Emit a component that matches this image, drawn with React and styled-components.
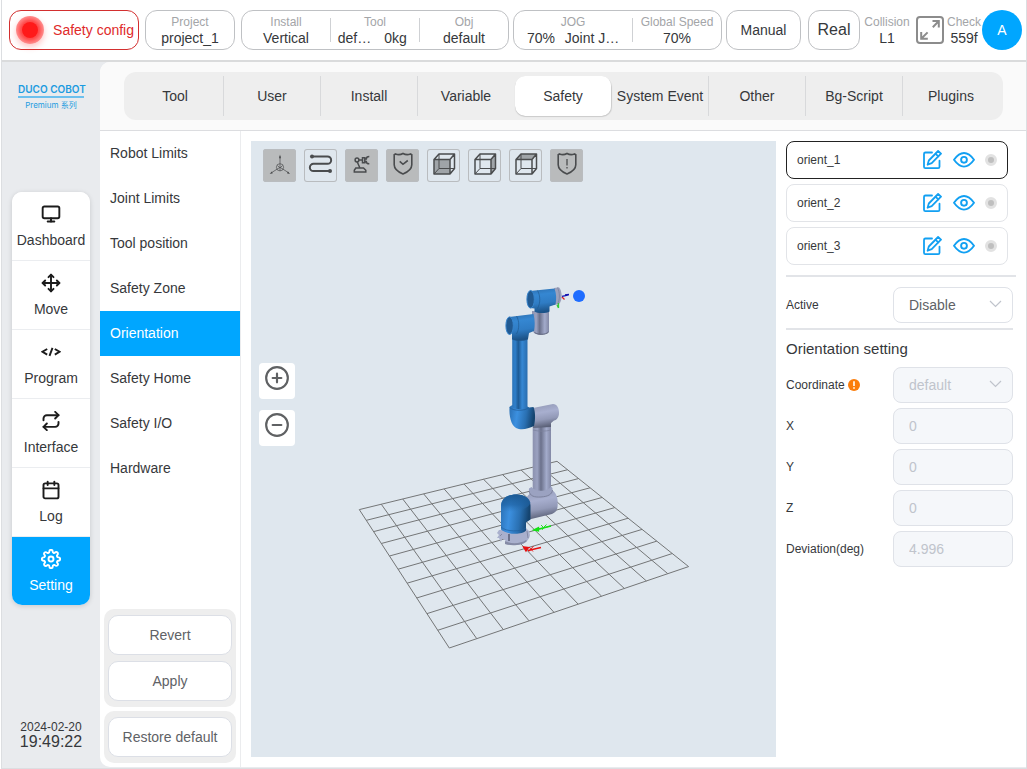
import React, { useState } from 'react';
import styled, { createGlobalStyle } from 'styled-components';
import { FiMonitor, FiMove, FiRepeat, FiCalendar, FiSettings, FiPlusCircle, FiMinusCircle } from 'react-icons/fi';

const GlobalStyle = createGlobalStyle`
	* {
		box-sizing: border-box;
	}
	body {
		margin: 0;
		background: #fff;
		color: #36383b;
		font-family: "Liberation Sans", Arial, sans-serif;
		font-size: 14px;
	}
	button, input, select {
		font-family: inherit;
		font-size: inherit;
		color: inherit;
	}
`;

const Page = styled.div`
	display: flex;
	flex-direction: column;
	min-height: 100vh;
	margin: 0 0 0 1px;
	border: 1px solid #dcdee1;
	border-top: none;
	background: #e9ebee;
`;

/* ---------- header ---------- */

const Header = styled.header`
	display: flex;
	align-items: center;
	gap: 4px;
	height: 62px;
	padding: 0 4px 0 7px;
	background: #fff;
	border-bottom: 2px solid #dadbdc;
`;

const Cluster = styled.div`
	display: flex;
	align-items: center;
	gap: ${props => props.$gap || 0}px;
	margin-left: ${props => (props.$end ? 'auto' : '0')};
`;

const Card = styled.div`
	display: flex;
	align-items: center;
	height: 40px;
	border: 1px solid #bfc1c4;
	border-radius: 12px;
	background: #fff;
`;

const CardButton = styled.button`
	width: ${props => props.$width}px;
	height: 40px;
	padding: 0;
	border: 1px solid #bfc1c4;
	border-radius: 12px;
	background: #fff;
	font-size: ${props => props.$size || 14}px;
`;

const SafetyButton = styled.button`
	display: flex;
	align-items: center;
	justify-content: space-between;
	width: 130px;
	height: 40px;
	padding: 0 4px 0 6px;
	border: 1px solid #d32f2f;
	border-radius: 12px;
	background: #fff;
	color: #e02a2a;
	white-space: nowrap;
`;

const Lamp = styled.span`
	display: flex;
	align-items: center;
	justify-content: center;
	width: 28px;
	height: 28px;
	border-radius: 50%;
	background: radial-gradient(#ff4d4d 45%, #ff9292 72%);
	box-shadow: 0 3px 6px rgba(255, 60, 60, 0.3);

	&::after {
		content: '';
		width: 16px;
		height: 16px;
		border-radius: 50%;
		background: #ff1a1a;
	}
`;

const Cell = styled.div`
	display: flex;
	flex-direction: column;
	align-items: center;
	width: ${props => props.$width}px;
	white-space: nowrap;
`;

const Divider = styled.span`
	width: 1px;
	height: 24px;
	background: #cfd1d4;
`;

const CellLabel = styled.span`
	color: #a3a5a8;
	font-size: 12px;
	line-height: 15px;
`;

const CellValue = styled.span`
	display: flex;
	line-height: 16px;
`;

const ValuePart = styled.span`
	width: ${props => props.$width}px;
	text-align: center;
`;

const ExpandButton = styled.button`
	display: flex;
	justify-content: center;
	width: 32px;
	padding: 0;
	border: none;
	background: none;
`;

const Avatar = styled.button`
	width: 40px;
	height: 40px;
	padding: 0;
	border: none;
	border-radius: 50%;
	background: #00a6ff;
	color: #fff;
`;

/* ---------- left side ---------- */

const Main = styled.div`
	display: flex;
	flex: 1;
	padding-bottom: 1px;
`;

const Sidebar = styled.aside`
	display: flex;
	flex-direction: column;
	align-items: center;
	width: 98px;
	padding: 20px 0 17px;
`;

const Logo = styled.div`
	width: 66px;
	color: #1c9be0;
	text-align: center;
	white-space: nowrap;
`;

const LogoName = styled.div`
	font-family: Inter, sans-serif;
	font-size: 10px;
	font-weight: 600;
	line-height: 14px;
	border-bottom: 2px solid #6cc0ee;
`;

const LogoSeries = styled.div`
	font-family: Inter, "Noto Sans CJK SC", sans-serif;
	font-size: 8px;
	line-height: 15px;
`;

const Nav = styled.nav`
	display: flex;
	flex-direction: column;
	width: 78px;
	margin-top: 79px;
	border-radius: 10px;
	background: #fff;
	box-shadow: 0 1px 5px rgba(0, 0, 0, 0.15);
	overflow: hidden;
`;

const NavButton = styled.button`
	display: flex;
	flex-direction: column;
	align-items: center;
	gap: 8px;
	height: 69px;
	padding: 12px 0 0;
	border: none;
	border-bottom: 1px solid #ebedf0;
	background: ${props => (props.$active ? '#00a6ff' : '#fff')};
	color: ${props => (props.$active ? '#fff' : '#36383b')};
	line-height: 16px;

	&:last-child {
		border-bottom: none;
		height: 68px;
	}

	svg {
		color: ${props => (props.$active ? '#fff' : '#1c1c1c')};
		stroke-width: 2.3;
	}
`;

const Clock = styled.div`
	margin-top: auto;
	font-size: 16px;
	line-height: 16px;
	text-align: center;
`;

const ClockDate = styled.div`
	font-size: 12px;
	line-height: 14px;
`;

/* ---------- content ---------- */

const Panel = styled.main`
	display: flex;
	flex: 1;
	flex-direction: column;
	min-width: 0;
	border-radius: 10px 0 0 10px;
	background: #fff;
	overflow: hidden;
`;

const TabArea = styled.div`
	padding: 10px 23px 10px 24px;
	background: #fafafa;
	border-bottom: 1px solid #dcdde0;
`;

const Tabs = styled.div`
	display: flex;
	padding: 4px 3px;
	border-radius: 12px;
	background: #eee;
`;

const Tab = styled.button`
	flex: 1 1 0;
	min-width: 0;
	height: 40px;
	padding: 0;
	border: none;
	border-right: 1px solid ${props => (props.$line ? '#d8d9db' : 'transparent')};
	border-radius: ${props => (props.$active ? '10px' : '0')};
	background: ${props => (props.$active ? '#fff' : 'none')};
	background-clip: padding-box;
	box-shadow: ${props => (props.$active ? '0 1px 1px rgba(0, 0, 0, 0.15)' : 'none')};
	white-space: nowrap;
`;

const Body = styled.div`
	display: flex;
	flex: 1;
`;

const Menu = styled.div`
	display: flex;
	flex-direction: column;
	width: 141px;
	padding-bottom: 4px;
	border-right: 1px solid #ebecee;
`;

const MenuItem = styled.button`
	height: 45px;
	padding: 0 10px 1px;
	border: none;
	background: ${props => (props.$active ? '#00a6ff' : 'none')};
	color: ${props => (props.$active ? '#fff' : '#36383b')};
	text-align: left;
`;

const Actions = styled.div`
	display: flex;
	flex-direction: column;
	gap: 4px;
	margin-top: auto;
	padding: 0 4px;
`;

const ActionGroup = styled.div`
	display: flex;
	flex-direction: column;
	gap: 6px;
	padding: 6px 4px;
	border-radius: 10px;
	background: #eee;
`;

const ActionButton = styled.button`
	height: 40px;
	padding: 0;
	border: 1px solid #dcdfe6;
	border-radius: 10px;
	background: #fff;
	color: #606266;
`;

/* ---------- 3D view ---------- */

const Viewer = styled.section`
	position: relative;
	flex: 1;
	margin: 10px 0 10px 10px;
	background: #dfe7ee;
`;

const Scene = styled.svg`
	position: absolute;
	top: 0;
	left: 0;
	width: 100%;
	height: 100%;
`;

const Toolbar = styled.div`
	position: relative;
	display: flex;
	gap: 8px;
	padding: 8px 12px;
`;

const ToolButton = styled.button`
	display: flex;
	width: 33px;
	height: 33px;
	padding: 0;
	border: none;
	border-radius: 3px;
	background: ${props => (props.$on ? '#b9bbbc' : 'transparent')};
	box-shadow: inset 0 0 0 1px #b9bcbf;
	color: #4a4c4e;
`;

const ZoomButtons = styled.div`
	position: absolute;
	top: 222px;
	left: 8px;
	display: flex;
	flex-direction: column;
	gap: 11px;
`;

const ZoomButton = styled.button`
	display: flex;
	align-items: flex-start;
	justify-content: center;
	width: 36px;
	height: 36px;
	padding: 2px 0 0;
	border: none;
	border-radius: 4px;
	background: #fff;
	color: #5f6163;
`;

/* ---------- right side ---------- */

const Settings = styled.section`
	width: 250px;
	padding: 10px;
	font-size: 12px;
`;

const OrientList = styled.div`
	display: flex;
	flex-direction: column;
	gap: 5px;
	padding-right: 8px;
`;

const OrientRow = styled.div`
	display: flex;
	align-items: center;
	gap: 10px;
	height: 38px;
	padding: 0 10px;
	border: 1px solid ${props => (props.$active ? '#222' : '#e2e4e8')};
	border-radius: 8px;
`;

const OrientName = styled.span`
	flex: 1;
`;

const IconButton = styled.button`
	display: flex;
	padding: 0;
	border: none;
	background: none;
	color: #12a0f2;
`;

const StateDot = styled.span`
	width: 12px;
	height: 12px;
	border: 3px solid #e2e2e2;
	border-radius: 50%;
	background: #bfbfbf;
`;

const Rule = styled.hr`
	width: 100%;
	height: 2px;
	margin: ${props => props.$top}px 0 ${props => props.$bottom || 0}px;
	border: none;
	background: #e2e4e8;
`;

const Form = styled.div`
	padding-right: 3px;
`;

const Fields = styled.div`
	display: flex;
	flex-direction: column;
	gap: 5px;
`;

const Title = styled.h2`
	margin: 0;
	font-size: 15px;
	font-weight: 400;
	line-height: 37px;
`;

const Field = styled.div`
	display: flex;
	align-items: center;
	justify-content: space-between;
`;

const FieldLabel = styled.label`
	display: flex;
	align-items: center;
	gap: 3px;
`;

const Input = styled.input`
	width: 120px;
	height: 36px;
	padding: 0 15px;
	border: 1px solid #dfe2e8;
	border-radius: 8px;
	background: #fff;
	color: #606266;
	font-size: 14px;

	&:disabled {
		background: #f5f7fa;
		color: #c0c4cc;
		opacity: 1;
	}
`;

const Select = styled(Input)`
	appearance: none;
`;

const SelectBox = styled.div`
	position: relative;
	display: flex;
`;

const Chevron = styled.svg`
	position: absolute;
	top: 13px;
	right: 11px;
	pointer-events: none;
`;

/* ---------- data ---------- */

const NAV = [
	{ name: 'Dashboard', icon: <FiMonitor size={20} /> },
	{ name: 'Move', icon: <FiMove size={20} /> },
	{ name: 'Program', icon: <CodeIcon /> },
	{ name: 'Interface', icon: <FiRepeat size={20} /> },
	{ name: 'Log', icon: <FiCalendar size={20} /> },
	{ name: 'Setting', icon: <FiSettings size={20} /> },
];

const TABS = ['Tool', 'User', 'Install', 'Variable', 'Safety', 'System Event', 'Other', 'Bg-Script', 'Plugins'];

const MENU = [
	'Robot Limits', 'Joint Limits', 'Tool position', 'Safety Zone',
	'Orientation', 'Safety Home', 'Safety I/O', 'Hardware',
];

const ORIENTS = ['orient_1', 'orient_2', 'orient_3'];

/* ---------- icons ---------- */

function CodeIcon() {
	return (
		<svg width="20" height="20" viewBox="0 0 20 20" fill="none" stroke="currentColor">
			<path d="M6.200 7L1.500 9.800l4.700 2.800M13.800 7l4.700 2.800-4.700 2.800M11.500 5.800L8.500 13.800" strokeWidth="1.900" />
		</svg>
	);
}

const ExpandIcon = () => (
	<svg width="28" height="28" viewBox="0 0 28 28" fill="none" stroke="#8c8c8c" strokeWidth="2">
		<rect x="1" y="1" width="26" height="26" rx="3" />
		<path d="M16.500 5h6.300v6.500M22.800 5l-6 6.200M5.200 16v6.800h6.600M5.200 22.800l6.400-6.400" />
	</svg>
);

const EditIcon = () => (
	<svg width="20" height="20" viewBox="0 0 20 20" fill="none" stroke="currentColor" strokeWidth="1.800" strokeLinejoin="round" strokeLinecap="round">
		<path d="M9 2.500H2.400A1.400 1.400 0 0 0 1 3.900v12.800a1.400 1.400 0 0 0 1.400 1.400h12.700a1.400 1.400 0 0 0 1.400-1.400v-6" />
		<path d="M4.600 14.700l1.200-4.200 9.300-9.500 2.900 2.700-9.300 9.500z" />
		<path d="M12.700 3.800l2.600 2.500" />
	</svg>
);

const EyeIcon = () => (
	<svg width="22" height="16" viewBox="0 0 22 16" fill="none" stroke="currentColor" strokeWidth="1.900" strokeLinejoin="round">
		<path d="M1 7.800c3.400-4.800 6.600-6.800 10-6.800s6.600 2 10 6.800c-3.400 4.800-6.600 6.800-10 6.800s-6.600-2-10-6.800z" />
		<circle cx="11" cy="7.800" r="2.900" />
	</svg>
);

const WarnIcon = () => (
	<svg width="12" height="12" viewBox="0 0 12 12">
		<circle cx="6" cy="6" r="6" fill="#fb7d0b" />
		<path d="M6 2.300v4.700M6 8.300v1.500" stroke="#fff" strokeWidth="1.600" />
	</svg>
);

const SHIELD = 'M17 4.500c2.500 1.400 5 1.500 7.500.5l1.300.8v10c0 4.300-3.300 7-8.800 9.200-5.500-2.200-8.800-4.900-8.800-9.200v-10l1.300-.8c2.500 1 5 .9 7.500-.5z';

const TOOLS = [
	{
		name: 'Axes',
		on: true,
		art: (
			<g strokeWidth="0.700">
				<circle cx="17" cy="18.300" r="3.600" />
				<path d="M17 18.300V7M17 18.300L8 24M17 18.300L26 24M14.500 16.500L17 19l2.500-2.500M17 19v3" />
				<path d="M17 5.500l1 3.800h-2zM6.700 25l2-2.500 1.200 1.700zM27 25l-2-2.500-1.200 1.700z" fill="currentColor" stroke="none" />
			</g>
		),
	},
	{
		name: 'Path',
		art: (
			<g strokeWidth="2">
				<path d="M8 7.500h15.500a3.600 3.600 0 0 1 0 7.300h-14a3.600 3.600 0 0 0 0 7.300H26" />
				<circle cx="8" cy="7.500" r="2" fill="currentColor" stroke="none" />
				<circle cx="26" cy="22.100" r="2" fill="currentColor" stroke="none" />
			</g>
		),
	},
	{
		name: 'Robot model',
		on: true,
		art: (
			<g strokeWidth="1.500">
				<circle cx="12" cy="11" r="1.900" />
				<path d="M14 11h3.500M12.300 13l2.500 5.800M10.800 19h7.700l2.300 2.300V23H9.300v-1.700z" />
				<path d="M17.500 8.700h2.300v5h-2.300zM24.300 7.500c-2.500 0-3 1-3 2.400h-1.500M24.300 14.800c-2.500 0-3-1-3-2.400h-1.500" />
			</g>
		),
	},
	{
		name: 'Safety planes',
		on: true,
		art: <g strokeWidth="1.600"><path d={SHIELD} /><path d="M13.700 12.300l3.300 3 4.800-3.800" /></g>,
	},
	{ name: 'Front view', art: <Cube face="M7 10.500h16V25H7z" /> },
	{ name: 'Side view', art: <Cube face="M23 10.500L27.500 5v14.500L23 25z" /> },
	{ name: 'Top view', art: <Cube face="M7 10.500L12 5h15.500L23 10.500z" /> },
	{
		name: 'Warnings',
		on: true,
		art: <g strokeWidth="1.600"><path d={SHIELD} /><path d="M17 10v6.500M17 18v1.600" strokeWidth="1.300" /></g>,
	},
];

function Cube({ face }) {
	return (
		<g strokeWidth="1.500" strokeLinejoin="round">
			<path d={face} fill="#9fa4a8" stroke="none" />
			<path d="M12 5v14.500h15.500M12 19.500L7 25" strokeWidth="1" />
			<path d="M7 10.500h16V25H7zM7 10.500L12 5h15.500L23 10.500M27.500 5v14.500L23 25" />
		</g>
	);
}

/* ---------- scene ---------- */

// floor corners: left, back, right, front
const FLOOR = [[359.3, 509.6], [557, 461.3], [688.6, 566.6], [449.3, 648]];

// projects a point of the unit square on to the floor
function project(u, v) {
	const [[x0, y0], [x1, y1], [x2, y2], [x3, y3]] = FLOOR;
	const dx1 = x1 - x2;
	const dy1 = y1 - y2;
	const dx2 = x3 - x2;
	const dy2 = y3 - y2;
	const dx3 = x0 - x1 + x2 - x3;
	const dy3 = y0 - y1 + y2 - y3;
	const det = dx1 * dy2 - dx2 * dy1;
	const g = (dx3 * dy2 - dx2 * dy3) / det;
	const h = (dx1 * dy3 - dx3 * dy1) / det;
	const w = g * u + h * v + 1;
	return [
		((x1 - x0 + g * x1) * u + (x3 - x0 + h * x3) * v + x0) / w,
		((y1 - y0 + g * y1) * u + (y3 - y0 + h * y3) * v + y0) / w,
	];
}

const gridPath = () => {
	let d = '';
	for (let i = 0; i <= 10; i++) {
		const t = i / 10;
		d += `M${project(t, 0)}L${project(t, 1)}M${project(0, t)}L${project(1, t)}`;
	}
	return d;
};

const Robot = () => (
	<g>
		<defs>
			<linearGradient id="blueTube">
				<stop offset="0" stopColor="#2c74b8" />
				<stop offset="0.2" stopColor="#2f7fca" />
				<stop offset="0.4" stopColor="#1d5a94" />
				<stop offset="0.65" stopColor="#3688d4" />
				<stop offset="1" stopColor="#2a6dae" />
			</linearGradient>
			<linearGradient id="blueJoint" x2="0.15" y2="1">
				<stop offset="0" stopColor="#2c6eae" />
				<stop offset="0.3" stopColor="#3587d2" />
				<stop offset="0.65" stopColor="#2f7cc4" />
				<stop offset="1" stopColor="#1c5388" />
			</linearGradient>
			<linearGradient id="elbow" x2="1" y2="0.15">
				<stop offset="0" stopColor="#2a6fb2" />
				<stop offset="0.35" stopColor="#3c90e0" />
				<stop offset="0.7" stopColor="#2a70b2" />
				<stop offset="1" stopColor="#15446f" />
			</linearGradient>
			<linearGradient id="dome" y2="1" x2="0">
				<stop offset="0" stopColor="#1c5a94" />
				<stop offset="0.6" stopColor="#1f63a4" stopOpacity="0.7" />
				<stop offset="1" stopColor="#2a70b2" stopOpacity="0" />
			</linearGradient>
			<linearGradient id="greyTube">
				<stop offset="0" stopColor="#8b91ae" />
				<stop offset="0.25" stopColor="#9ba2c1" />
				<stop offset="0.45" stopColor="#6b718b" />
				<stop offset="0.75" stopColor="#a3abcb" />
				<stop offset="1" stopColor="#8288a5" />
			</linearGradient>
			<linearGradient id="greyJoint" x2="0.2" y2="1">
				<stop offset="0" stopColor="#9097b4" />
				<stop offset="0.4" stopColor="#a8afcf" />
				<stop offset="0.7" stopColor="#9299b7" />
				<stop offset="1" stopColor="#5c6279" />
			</linearGradient>
		</defs>

		{/* base plate */}
		<path d="M499 530l27-2 3 3 1 4c-1 6-6 10-14 10-7 0-10-2-11-5l-3-1-1 3-2-4-2 0 2-3-2-2z" fill="#a9b0cd" />
		<path d="M505 541c5 3 16 3 21-1l1 1c-5 5-17 5-22 3z" fill="#848aa5" />
		<path d="M509 534v7" stroke="#4b5068" strokeWidth="1.300" />
		<path d="M527 531l1 7M500 536l2-2" stroke="#7b819b" strokeWidth="0.800" />

		{/* shoulder */}
		<path d="M526 498l5-6 21-2c4 3 6 7 5.700 14 0 5-1 8-5.700 10l-25 6z" fill="url(#greyJoint)" />
		<path d="M532.700 420H551v74h-18.300z" fill="url(#greyTube)" />
		<path d="M529 488.500c-1 6 3 9 12 8.500 8 0 12-3 11.500-9l-1.500-1.500c-3 5-15 6-19.500.5z" fill="#9ba2c1" />
		<path d="M529 491c1 5 5 6.500 12 6s11-2.500 11.500-7" fill="none" stroke="#737993" strokeWidth="0.800" />
		<path d="M501 506c0-7 6-11.500 15-11.500s14.500 4.500 14.500 11v14l-4.500 3v8c-4 5-20 4-25-1z" fill="url(#elbow)" />
		<path d="M501.300 504c1-6 7-9.500 14.700-9.500 8 0 13 3 14.300 8-2 9-24 12-29 7z" fill="url(#dome)" />
		<path d="M501 527c5 5 20 5 25 1" fill="none" stroke="#23609c" strokeWidth="0.700" />

		{/* elbow */}
		<path d="M533 408l20-4c4 0 6 4 6 9 0 4-2 7-5 7.500l-3 2.500v4l-18 1z" fill="url(#greyJoint)" />
		<path d="M533 430c5 1.500 13 1.500 18 0" fill="none" stroke="#7d839e" strokeWidth="0.700" />
		<path d="M509.500 407c2-2 4-2.500 8-2.500 5 0 9 1 11.500 3l4.500-.5c2 5 2 13 .5 19-6 3-13 4.500-18 2-5-3-7-12-6.500-21z" fill="url(#elbow)" />
		<path d="M512.200 335h15.300v72c-4 3-11 3-15.300 0z" fill="url(#blueTube)" />
		<path d="M509.700 407.500c4 4 15.500 3.500 19.300 0" fill="none" stroke="#22609c" strokeWidth="0.800" />

		{/* wrist */}
		<path d="M532 311h17v21c-2 3-12 4-15 1l-2-4z" fill="url(#greyTube)" />
		<path d="M534.500 332.500c4 2.500 11 2.500 14-.5" fill="none" stroke="#62687f" />
		<path d="M509 317l24.500-3c1.500 6 1.500 12 .5 17l-5 2-1 6c-4 2-12 2-16 0v-4.500z" fill="url(#blueJoint)" />
		<ellipse cx="509.600" cy="325.700" rx="3.700" ry="8.800" fill="#215a92" stroke="#3784cc" />
		<path d="M516.500 316c3 5 3 13 0 18M512 339c4 2 12 2 16 0" fill="none" stroke="#1f5589" strokeWidth="0.600" />
		<path d="M554 288l5-.7c3 3 4 13 0 16.700l-5 1z" fill="#9ba1bc" />
		<path d="M557.500 287.500c2.500 5 2.500 12 0 17" fill="none" stroke="#777d96" strokeWidth="0.700" />
		<path d="M530 291l24.500-2.500c2 5 2 11 1 16l-6 2v5c-3 2-12 2-15 0v-3l-4-.5z" fill="url(#blueJoint)" />
		<ellipse cx="530.600" cy="299.300" rx="3.700" ry="8.800" fill="#215a92" stroke="#3784cc" />
		<path d="M537.500 290.500c3 5 3 13 0 18" fill="none" stroke="#1f5589" strokeWidth="0.600" />
	</g>
);

const View = () => (
	<Scene viewBox="251 141 525 616" aria-label="Robot view">
		<path d={gridPath()} fill="none" stroke="#747677" strokeWidth="1" />
		<Robot />
		<g fill="none" strokeWidth="1.300">
			<path d="M533.500 530l5-2.500v3.500zM537 529.500l14-3.500" stroke="#12e312" fill="#12e312" />
			<path d="M541 525l2.500 2.500 3-3M543.500 527.500l-1.500 2.500" stroke="#12e312" strokeWidth="0.900" />
			<path d="M523.500 547l5 .5-2.500 3.500zM528 550.500l13-3" stroke="#e81010" fill="#e81010" />
			<path d="M529 547l4 4.500M533.500 546l-4.500 5.500" stroke="#e81010" strokeWidth="0.900" />
			<path d="M558.500 303v5M557 305l1.500 3" stroke="#36c936" />
			<path d="M562 297l2.500 2.500" stroke="#e02020" />
			<path d="M562 296.300l7-1.500M565 295l4-.5" stroke="#1010b0" />
		</g>
		<circle cx="579" cy="296" r="6" fill="#1f6dff" />
	</Scene>
);

const ChevronDown = () => (
	<Chevron width="13" height="8" viewBox="0 0 13 8" fill="none" stroke="#c0c4cc" strokeWidth="1.200">
		<path d="M1 1l5.500 5.500L12 1" />
	</Chevron>
);

const DisabledInput = ({ id, label, value }) => (
	<Field>
		<FieldLabel htmlFor={id}>{label}</FieldLabel>
		<Input id={id} defaultValue={value} disabled />
	</Field>
);

const TopBar = () => (
	<Header>
		<Cluster $gap={6}>
			<SafetyButton><Lamp />Safety config</SafetyButton>
			<Card>
				<Cell $width={88}><CellLabel>Project</CellLabel><CellValue>project_1</CellValue></Cell>
			</Card>
			<Card>
				<Cell $width={88}><CellLabel>Install</CellLabel><CellValue>Vertical</CellValue></Cell>
				<Divider />
				<Cell $width={88}>
					<CellLabel>Tool</CellLabel>
					<CellValue><ValuePart $width={41}>def…</ValuePart><ValuePart $width={41}>0kg</ValuePart></CellValue>
				</Cell>
				<Divider />
				<Cell $width={88}><CellLabel>Obj</CellLabel><CellValue>default</CellValue></Cell>
			</Card>
		</Cluster>
		<Cluster $gap={4}>
			<Card>
				<Cell $width={118}>
					<CellLabel>JOG</CellLabel>
					<CellValue><ValuePart $width={38}>70%</ValuePart><ValuePart $width={64}>Joint J…</ValuePart></CellValue>
				</Cell>
				<Divider />
				<Cell $width={88}><CellLabel>Global Speed</CellLabel><CellValue>70%</CellValue></Cell>
			</Card>
			<CardButton $width={75}>Manual</CardButton>
		</Cluster>
		<Cluster $end>
			<CardButton $width={52} $size={16}>Real</CardButton>
			<Cell $width={54}><CellLabel>Collision</CellLabel><CellValue>L1</CellValue></Cell>
			<ExpandButton aria-label="Full screen"><ExpandIcon /></ExpandButton>
			<Cell $width={36}><CellLabel>Check</CellLabel><CellValue>559f</CellValue></Cell>
			<Avatar>A</Avatar>
		</Cluster>
	</Header>
);

const App = () => {
	const [nav, setNav] = useState('Setting');
	const [tab, setTab] = useState('Safety');
	const [item, setItem] = useState('Orientation');
	const [orient] = useState('orient_1');

	return (
		<Page>
			<GlobalStyle />
			<TopBar />
			<Main>
				<Sidebar>
					<Logo>
						<LogoName>DUCO COBOT</LogoName>
						<LogoSeries>Premium 系列</LogoSeries>
					</Logo>
					<Nav>
						{NAV.map(({ name, icon }) => (
							<NavButton key={name} $active={name === nav} onClick={() => setNav(name)}>
								{icon}
								{name}
							</NavButton>
						))}
					</Nav>
					<Clock><ClockDate>2024-02-20</ClockDate>19:49:22</Clock>
				</Sidebar>
				<Panel>
					<TabArea>
						<Tabs>
							{TABS.map((name, i) => (
								<Tab
									key={name}
									$active={name === tab}
									$line={name !== tab && i < TABS.length - 1 && TABS[i + 1] !== tab}
									onClick={() => setTab(name)}
								>
									{name}
								</Tab>
							))}
						</Tabs>
					</TabArea>
					<Body>
						<Menu>
							{MENU.map(name => (
								<MenuItem key={name} $active={name === item} onClick={() => setItem(name)}>{name}</MenuItem>
							))}
							<Actions>
								<ActionGroup>
									<ActionButton>Revert</ActionButton>
									<ActionButton>Apply</ActionButton>
								</ActionGroup>
								<ActionGroup>
									<ActionButton>Restore default</ActionButton>
								</ActionGroup>
							</Actions>
						</Menu>
						<Viewer>
							<View />
							<Toolbar>
								{TOOLS.map(({ name, on, art }) => (
									<ToolButton key={name} $on={on} aria-label={name}>
										<svg width="33" height="33" viewBox="0 0 33 33" fill="none" stroke="currentColor">{art}</svg>
									</ToolButton>
								))}
							</Toolbar>
							<ZoomButtons>
								<ZoomButton aria-label="Zoom in"><FiPlusCircle size={26} /></ZoomButton>
								<ZoomButton aria-label="Zoom out"><FiMinusCircle size={26} /></ZoomButton>
							</ZoomButtons>
						</Viewer>
						<Settings>
							<OrientList>
								{ORIENTS.map(name => (
									<OrientRow key={name} $active={name === orient}>
										<OrientName>{name}</OrientName>
										<IconButton aria-label={`Edit ${name}`}><EditIcon /></IconButton>
										<IconButton aria-label={`Show ${name}`}><EyeIcon /></IconButton>
										<StateDot />
									</OrientRow>
								))}
							</OrientList>
							<Rule $top={10} $bottom={10} />
							<Form>
								<Field>
									<FieldLabel htmlFor="active">Active</FieldLabel>
									<SelectBox>
										<Select as="select" id="active"><option>Disable</option><option>Enable</option></Select>
										<ChevronDown />
									</SelectBox>
								</Field>
								<Rule $top={5} />
								<Title>Orientation setting</Title>
								<Fields>
									<Field>
										<FieldLabel htmlFor="coordinate">Coordinate<WarnIcon /></FieldLabel>
										<SelectBox>
											<Select as="select" id="coordinate" disabled><option>default</option></Select>
											<ChevronDown />
										</SelectBox>
									</Field>
									<DisabledInput id="x" label="X" value="0" />
									<DisabledInput id="y" label="Y" value="0" />
									<DisabledInput id="z" label="Z" value="0" />
									<DisabledInput id="deviation" label="Deviation(deg)" value="4.996" />
								</Fields>
							</Form>
						</Settings>
					</Body>
				</Panel>
			</Main>
		</Page>
	);
};

export default App;
